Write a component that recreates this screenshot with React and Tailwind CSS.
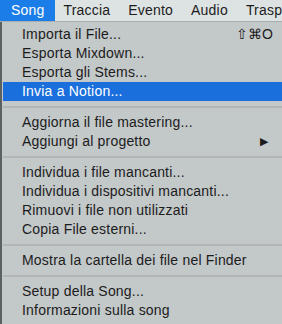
import React from 'react';

const MENU_BAR = ['Song', 'Traccia', 'Evento', 'Audio', 'Trasporto'];

const SECTIONS = [
  [
    { label: 'Importa il File...', shortcut: '⇧⌘O' },
    { label: 'Esporta Mixdown...' },
    { label: 'Esporta gli Stems...' },
    { label: 'Invia a Notion...', active: true },
  ],
  [
    { label: 'Aggiorna il file mastering...' },
    { label: 'Aggiungi al progetto', submenu: true },
  ],
  [
    { label: 'Individua i file mancanti...' },
    { label: 'Individua i dispositivi mancanti...' },
    { label: 'Rimuovi i file non utilizzati' },
    { label: 'Copia File esterni...' },
  ],
  [{ label: 'Mostra la cartella dei file nel Finder' }],
  [
    { label: 'Setup della Song...' },
    { label: 'Informazioni sulla song' },
  ],
];

export default function App() {
  return (
    <div
      className="w-[282px] h-[324px] overflow-hidden bg-[#c3c8c9] text-[14px] tracking-[0.2px] text-[#1c1c1c]"
      style={{ fontFamily: '"Helvetica Neue", "Liberation Sans", Arial, sans-serif' }}
    >
      {/* Menu bar */}
      <div className="flex h-[22px] bg-[#dde3e3] border-b border-[#a9aeaf] whitespace-nowrap">
        {MENU_BAR.map((name, i) => (
          <div
            key={name}
            className={
              i === 0
                ? 'flex items-center pl-[11px] pr-[10px] bg-[#1b7ee8] text-white'
                : 'flex items-center px-[9px]'
            }
          >
            {name}
          </div>
        ))}
      </div>

      {/* Dropdown */}
      <div className="flex h-[302px]">
        <div className="w-[2px] bg-[#5b6061]" />
        <div className="flex-1 pt-[3px] pl-px">
          {SECTIONS.map((items, s) => (
            <div key={s}>
              {s > 0 && (
                <div className="py-[5px]">
                  <div className="h-[2px] bg-[#b1b5b6]" />
                </div>
              )}
              {items.map(item => (
                <div
                  key={item.label}
                  className={`flex items-center h-[19px] pl-[19px] pr-[9px] whitespace-nowrap ${
                    item.active ? 'bg-[#1b6fdc] text-white' : ''
                  }`}
                >
                  <span>{item.label}</span>
                  {item.shortcut && <span className="ml-auto">{item.shortcut}</span>}
                  {item.submenu && <span className="ml-auto pr-[5px] text-[11px]">▶</span>}
                </div>
              ))}
            </div>
          ))}
        </div>
      </div>
    </div>
  );
}
